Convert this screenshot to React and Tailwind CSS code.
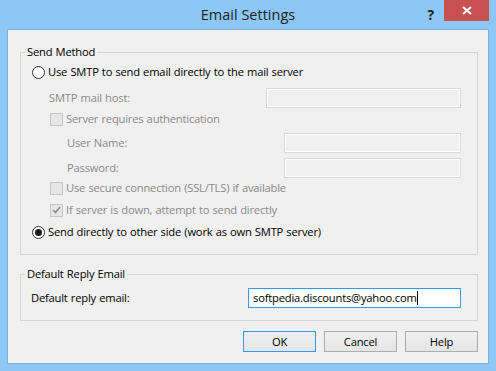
import React from "react";

function Radio({ checked }) {
  return (
    <span className="w-[13px] h-[13px] rounded-full border border-[#333333] bg-white flex items-center justify-center shrink-0">
      {checked && <span className="w-[7px] h-[7px] rounded-full bg-[#1a1a1a]" />}
    </span>
  );
}

function Check({ checked }) {
  return (
    <span className="w-[13px] h-[13px] border border-[#c6c6c6] bg-[#e6e6e6] flex items-center justify-center shrink-0">
      {checked && (
        <svg width="9" height="8" viewBox="0 0 9 8">
          <path d="M1 4 L3.5 6.5 L8 1" fill="none" stroke="#8a8a8a" strokeWidth="1.6" />
        </svg>
      )}
    </span>
  );
}

function DisabledInput({ w }) {
  return (
    <div className={`${w} h-[20px] border border-[#d9d9d9] bg-[#f0f0f0] shadow-[inset_0_0_0_1px_#ffffff]`} />
  );
}

function Button({ children, focused }) {
  return (
    <div
      className={`w-[73px] h-[21px] border ${focused ? "border-[#3399ff]" : "border-[#acacac]"} bg-gradient-to-b from-[#f0f0f0] to-[#e5e5e5] flex items-center justify-center text-black`}
    >
      {children}
    </div>
  );
}

export default function App() {
  return (
    <div className="w-[496px] h-[371px] bg-[#8cc7f7] flex flex-col font-['Open_Sans',sans-serif] text-[11.2px] tracking-[-0.2px] [word-spacing:0.5px] leading-[16px] overflow-hidden">
      <div className="h-[29px] shrink-0 grid grid-cols-[1fr_auto_1fr]">
        <div />
        <div className="text-[14.5px] tracking-normal [word-spacing:0px] leading-[30px] text-[#222222]">Email Settings</div>
        <div className="flex justify-end items-start pr-[7px]">
          <span className="mt-[7px] mr-[10px] text-[14px] leading-[16px] font-bold text-[#1e1e1e]">?</span>
          <div className="w-[45px] h-[21px] bg-[#c75050] flex items-center justify-center">
            <svg width="10" height="9" viewBox="0 0 10 9">
              <path d="M1 1 L9 8 M9 1 L1 8" stroke="#ffffff" strokeWidth="2" />
            </svg>
          </div>
        </div>
      </div>
      <div className="mx-[7px] mb-[7px] flex-1 border border-[#7eaed9] bg-[#f0f0f0] flex flex-col pl-[12px] pr-[10px] pt-[14px]">
        <fieldset className="border border-[#d5d5d5] pb-[12px] flex flex-col">
          <legend className="ml-[4px] px-[2px] leading-[16px] text-black">Send Method</legend>
          <div className="mt-[2px] h-[20px] flex items-center pl-[11px] text-black">
            <Radio />
            <span className="ml-[3px]">Use SMTP to send email directly to the mail server</span>
          </div>
          <div className="mt-[6px] h-[20px] flex items-center justify-between pl-[28px] pr-[16px] text-[#8a8a8a]">
            <span>SMTP mail host:</span>
            <DisabledInput w="w-[195px]" />
          </div>
          <div className="mt-[1px] h-[20px] flex items-center pl-[29px] text-[#8a8a8a]">
            <Check />
            <span className="ml-[3px]">Server requires authentication</span>
          </div>
          <div className="mt-[4px] h-[20px] flex items-center justify-between pl-[46px] pr-[16px] text-[#8a8a8a]">
            <span>User Name:</span>
            <DisabledInput w="w-[177px]" />
          </div>
          <div className="mt-[5px] h-[20px] flex items-center justify-between pl-[46px] pr-[16px] text-[#8a8a8a]">
            <span>Password:</span>
            <DisabledInput w="w-[177px]" />
          </div>
          <div className="h-[20px] flex items-center pl-[29px] text-[#8a8a8a]">
            <Check />
            <span className="ml-[3px]">Use secure connection (SSL/TLS) if available</span>
          </div>
          <div className="mt-[2px] h-[20px] flex items-center pl-[29px] text-[#8a8a8a]">
            <Check checked />
            <span className="ml-[3px]">If server is down, attempt to send directly</span>
          </div>
          <div className="mt-[2px] h-[20px] flex items-center pl-[11px] text-black">
            <Radio checked />
            <span className="ml-[3px]">Send directly to other side (work as own SMTP server)</span>
          </div>
        </fieldset>
        <fieldset className="mt-[11px] border border-[#d5d5d5] pb-[12px] flex flex-col">
          <legend className="ml-[4px] px-[2px] leading-[16px] text-black">Default Reply Email</legend>
          <div className="mt-[6px] h-[20px] flex items-center justify-between pl-[10px] pr-[16px] text-black">
            <span>Default reply email:</span>
            <div className="w-[213px] h-[20px] border border-[#3399ff] bg-white flex items-center pl-[4px]">
              <span>softpedia.discounts@yahoo.com</span>
              <span className="w-[1px] h-[14px] bg-black" />
            </div>
          </div>
        </fieldset>
        <div className="mt-[10px] flex justify-end gap-[8px]">
          <Button focused>OK</Button>
          <Button>Cancel</Button>
          <Button>Help</Button>
        </div>
      </div>
    </div>
  );
}
